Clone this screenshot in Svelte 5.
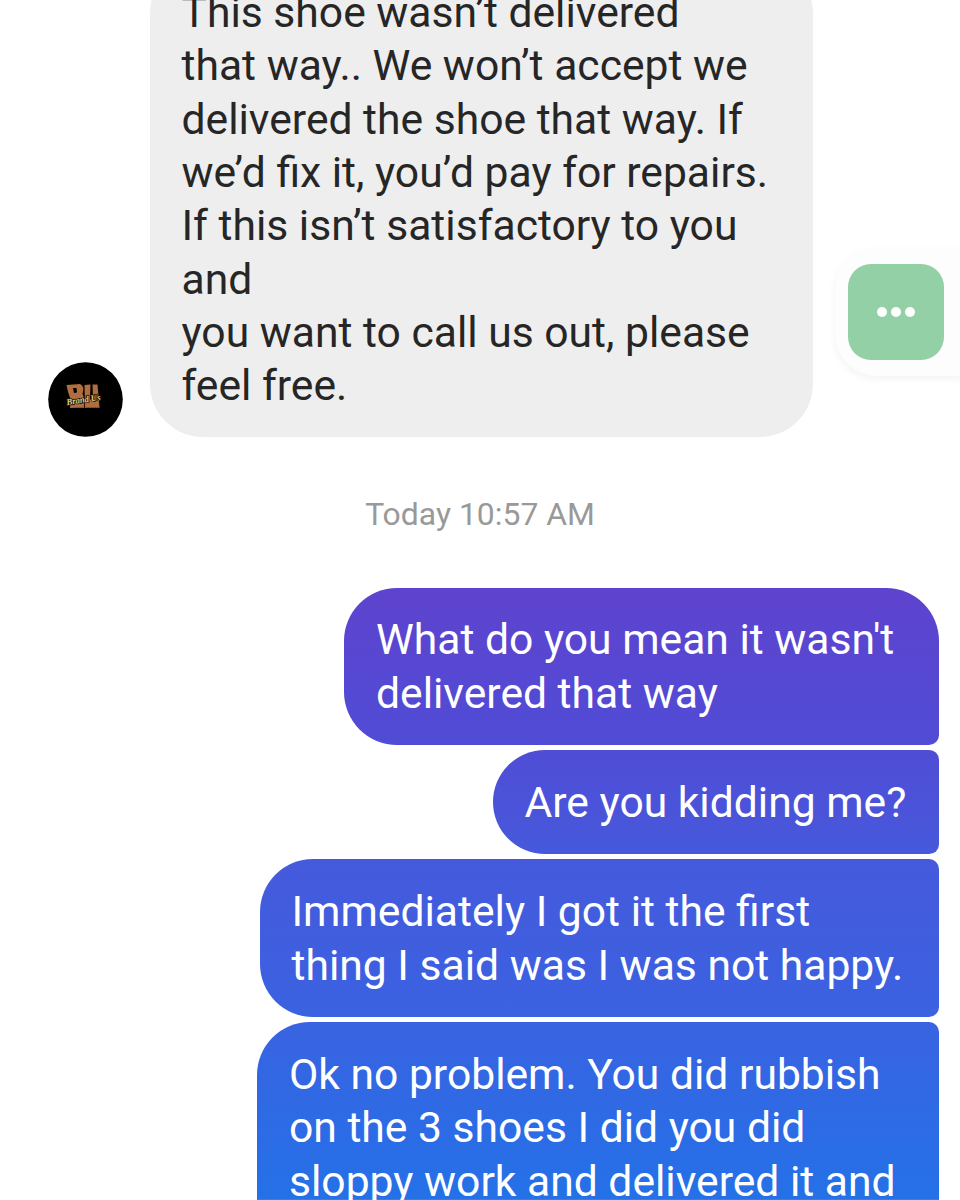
<script>
  const reply = [
    'This shoe wasn’t delivered',
    'that way.. We won’t accept we',
    'delivered the shoe that way. If',
    'we’d fix it, you’d pay for repairs.',
    'If this isn’t satisfactory to you',
    'and',
    'you want to call us out, please',
    'feel free.'
  ];
  const sent = [
    { width: 594.5, lines: ["What do you mean it wasn't", 'delivered that way'] },
    { width: 446, lines: ['Are you kidding me?'] },
    { width: 679, lines: ['Immediately I got it the first', 'thing I said was I was not happy.'] },
    {
      width: 681.5,
      lines: ['Ok no problem. You did rubbish', 'on the 3 shoes I did you did', 'sloppy work and delivered it and']
    }
  ];
</script>

<main class="chat">
  <section class="received">
    <svg class="avatar" viewBox="0 0 75 75" aria-hidden="true">
      <circle cx="37.5" cy="37.5" r="37.3" fill="#000" />
      <path d="M18.500 23 L32 22 Q37 24 34.500 32 Q37 36 36 45.500 L22 46 L22.500 37 L20 30 Z M25 26 L26 31 L29 30.500 L28.500 26 Z" fill="#b06d3e" fill-rule="evenodd" />
      <path d="M36.500 23 L42.500 22.500 L42 37 Q43.500 39 45 37 L44.500 22.500 L49.500 22.500 L51.500 45.500 L37 45.500 Z" fill="#b06d3e" />
      <text x="18.500" y="40.500" textLength="34" lengthAdjust="spacingAndGlyphs" transform="rotate(-9 36 38)" class="script">Brand Us</text>
      <path d="M30 45.500 H52" stroke="#8d5c33" stroke-width="1.200" stroke-dasharray="1.600 .6" />
    </svg>
    <div class="bubble grey">
      {#each reply as line}<p>{line}</p>{/each}
    </div>
  </section>

  <time class="stamp">Today 10:57 AM</time>

  <section class="sent">
    {#each sent as message}
      <div class="bubble violet" style="width: {message.width}px">
        {#each message.lines as line}<p>{line}</p>{/each}
      </div>
    {/each}
  </section>

  <div class="floating">
    <div class="more"><i></i><i></i><i></i></div>
  </div>
</main>

<style>
  :global(body) { margin: 0; background: #fff; }
  .chat {
    position: relative;
    box-sizing: border-box;
    width: 960px;
    height: 1200px;
    overflow: hidden;
    display: flex;
    flex-direction: column;
    background: #fff;
    font-family: Roboto, sans-serif;
    font-size: 42.64px;
    line-height: 53.33px;
  }
  p { margin: 0; white-space: nowrap; }
  .received {
    height: 437px;
    flex: none;
    display: flex;
    align-items: flex-end;
    gap: 27px;
    padding-left: 48px;
  }
  .avatar { width: 75px; height: 75px; flex: none; }
  .script {
    font: italic 700 9px "Liberation Serif", serif;
    fill: #e2cb80;
    stroke: #21160a;
    stroke-width: 1.6px;
    paint-order: stroke;
  }
  .bubble { box-sizing: border-box; padding: 25.8px 0 24.7px 32px; }
  .grey {
    width: 662.5px;
    padding-bottom: 24.4px;
    padding-left: 31.5px;
    border-radius: 53px;
    background: #eee;
    color: #262626;
  }
  .stamp {
    flex: none;
    margin-top: 57px;
    height: 40px;
    line-height: 40px;
    font-size: 31.9px;
    text-align: center;
    color: #999;
  }
  .sent {
    flex: none;
    margin-top: 53.5px;
    padding-right: 21.5px;
    display: flex;
    flex-direction: column;
    align-items: flex-end;
    gap: 5.5px;
  }
  .violet {
    border-radius: 53px 10px 10px 53px;
    color: #fff;
    background: linear-gradient(#5e43ce 587px, #504cd6 745px, #455adc 865px, #3a62e1 1015px, #2471e8 1200px) fixed;
  }
  .violet:first-child { border-top-right-radius: 53px; }
  .violet:last-child { padding-bottom: 90px; }
  .floating {
    position: absolute;
    top: 248px;
    left: 835px;
    width: 160px;
    height: 128px;
    box-sizing: border-box;
    padding: 16px 13px;
    border-radius: 42px;
    background: #fdfdfd;
    box-shadow: 0 3px 8px rgba(0, 0, 0, .05);
  }
  .more {
    width: 96px;
    height: 96px;
    border-radius: 23px;
    display: flex;
    align-items: center;
    justify-content: center;
    gap: 4px;
    background: #93d0a5;
  }
  .more i { width: 10px; height: 10px; border-radius: 50%; background: #fff; }
</style>
